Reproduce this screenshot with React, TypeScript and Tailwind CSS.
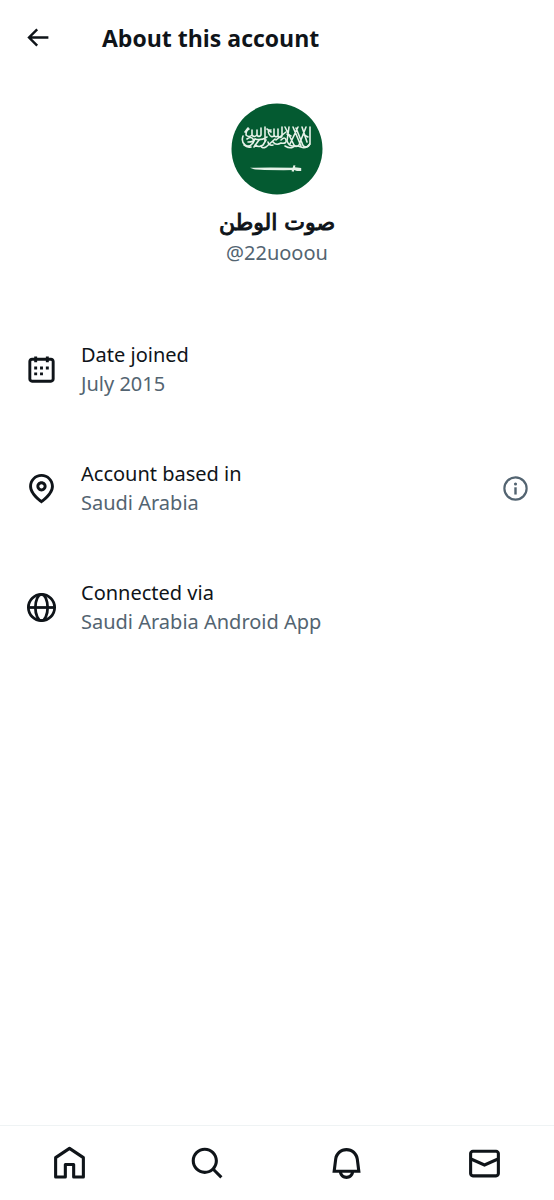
import React from "react";

type IconProps = {
  children: React.ReactNode;
  className: string;
};

const Icon = ({ children, className }: IconProps) => (
  <svg viewBox="0 0 24 24" fill="currentColor" className={className} aria-hidden="true">
    {children}
  </svg>
);

const Avatar = () => (
  <svg viewBox="0 0 92 92" className="h-[92px] w-[92px]" role="img" aria-label="Profile picture">
    <circle cx="46" cy="46" r="45.5" fill="#045a31" />
    {/* flag calligraphy */}
    <g
      fill="none"
      stroke="#e6f1e8"
      strokeWidth="1.6"
      strokeLinecap="round"
      strokeLinejoin="round"
    >
      {/* right part */}
      <path d="M79 24v16q-1 4-4 4t-4-4L65 25M75 24l-7 18q-3 3-5 0M71 24l5 15M67 24l-8 17M62 24l8 19M58 24l-2 14q2 5 6 5M54 24l9 18" />
      <path d="M79 41q-4 5-9 3t-8 0-8-1M73 32l4 2M60 33l-4-2" />
      {/* middle part */}
      <path d="M51 24v9q-2 3-4 0v-7M47 33q-3 2-4-1v-6M43 33q-3 2-5-2t2-4M50 37q4-4 5 0t-5 3q-5 3-8-1M44 36l-9 8q-4 2-5-1M55 29l-10 8" />
      {/* left part */}
      <path d="M34 24v14M30 25v7q-2 3-4 0v-5M26 32q-3 3-5 0v-5M21 32q-3 3-6 0 0-5 3-6M36 34q-6 4-12 2M17 25l-3 4" />
      <path d="M12 33q-2 6 2 9t8-2l2-4M16 36q4-3 6 0t-5 3M24 42q4 3 8 0l3-5M37 39q1 4 5 3M28 37l-5 7M13 42q3 3 7 2M36 26l4 3" />
    </g>
    {/* sword */}
    <g fill="#e6f1e8">
      <path d="M19 64.800q10-.300 44-.100v2.400q-33 .200-40-.800z" />
      <path d="M60.500 68.300l2-6 2 .300-.6 1.700 6.300.6v3.200l-4.300-.1-2.700-.9-.5 1.600z" />
    </g>
  </svg>
);

const rows = [
  {
    title: "Date joined",
    value: "July 2015",
    icon: (
      <path d="M7 4V3h2v1h6V3h2v1h1.500C19.890 4 21 5.120 21 6.500v12c0 1.380-1.110 2.500-2.500 2.500h-13C4.120 21 3 19.880 3 18.500v-12C3 5.120 4.120 4 5.500 4H7zm0 2H5.500c-.270 0-.500.220-.500.500v12c0 .280.230.500.500.500h13c.280 0 .500-.220.500-.500v-12c0-.280-.220-.500-.500-.500H17v1h-2V6H9v1H7V6zm0 6h2v-2H7v2zm0 4h2v-2H7v2zm4-4h2v-2h-2v2zm0 4h2v-2h-2v2zm4-4h2v-2h-2v2z" />
    ),
  },
  {
    title: "Account based in",
    value: "Saudi Arabia",
    info: true,
    icon: (
      <path d="M12 7c-1.930 0-3.500 1.570-3.500 3.500S10.070 14 12 14s3.500-1.570 3.500-3.500S13.930 7 12 7zm0 5c-.827 0-1.500-.673-1.500-1.500S11.173 9 12 9s1.500.673 1.500 1.500S12.827 12 12 12zm0-10c-4.687 0-8.500 3.813-8.500 8.500 0 5.967 7.621 11.116 7.945 11.332l.555.370.555-.370c.324-.216 7.945-5.365 7.945-11.332C20.500 5.813 16.687 2 12 2zm0 17.770c-1.665-1.241-6.500-5.196-6.500-9.270C5.500 6.916 8.416 4 12 4s6.500 2.916 6.500 6.500c0 4.073-4.835 8.028-6.500 9.270z" />
    ),
  },
  {
    title: "Connected via",
    value: "Saudi Arabia Android App",
    icon: (
      <g fill="none" stroke="currentColor" strokeWidth="1.9">
        <circle cx="12" cy="12" r="9" />
        <ellipse cx="12" cy="12" rx="4.200" ry="9" />
        <path d="M3 12h18" />
      </g>
    ),
  },
];

const tabs = [
  {
    label: "Home",
    icon: (
      <path
        d="M12 2.200L3 8.200V20.800h6.300v-8.200h5.400v8.200H21V8.200z"
        fill="none"
        stroke="currentColor"
        strokeWidth="2"
        strokeLinejoin="round"
      />
    ),
  },
  {
    label: "Search",
    icon: (
      <path d="M10.250 3.750c-3.590 0-6.500 2.910-6.500 6.500s2.910 6.500 6.500 6.500c1.795 0 3.419-.726 4.596-1.904 1.178-1.177 1.904-2.801 1.904-4.596 0-3.590-2.910-6.500-6.500-6.500zm-8.500 6.500c0-4.694 3.806-8.500 8.500-8.500s8.500 3.806 8.500 8.500c0 1.986-.682 3.815-1.824 5.262l4.781 4.781-1.414 1.414-4.781-4.781c-1.447 1.142-3.276 1.824-5.262 1.824-4.694 0-8.500-3.806-8.500-8.500z" />
    ),
  },
  {
    label: "Notifications",
    icon: (
      <path d="M19.993 9.042C19.480 5.017 16.054 2 11.996 2s-7.490 3.021-7.999 7.051L2.866 18H7.100c.463 2.282 2.481 4 4.900 4s4.437-1.718 4.900-4h4.236l-1.143-8.958zM12 20c-1.306 0-2.417-.835-2.829-2h5.658c-.412 1.165-1.523 2-2.829 2zm-6.866-4l.847-6.698C6.364 6.272 8.941 4 11.996 4s5.627 2.268 6.013 5.295L18.864 16H5.134z" />
    ),
  },
  {
    label: "Messages",
    icon: (
      <path d="M1.998 5.500c0-1.381 1.119-2.500 2.500-2.500h15c1.381 0 2.500 1.119 2.500 2.500v13c0 1.381-1.119 2.500-2.500 2.500h-15c-1.381 0-2.500-1.119-2.500-2.500v-13zm2.500-.500c-.276 0-.500.224-.500.500v2.764l8 3.638 8-3.636V5.500c0-.276-.224-.500-.500-.500h-15zm15.500 5.463l-8 3.636-8-3.638V18.500c0 .276.224.500.500.500h15c.276 0 .500-.224.500-.500v-8.037z" />
    ),
  },
];

const App = () => {
  return (
    <div className="flex min-h-screen flex-col bg-white font-['Noto_Sans','DejaVu_Sans',sans-serif] text-[#0f1419]">
      {/* top bar */}
      <header className="flex h-[75px] items-center px-[23px]">
        <button type="button" aria-label="Back">
          <Icon className="h-[29px] w-[29px]">
            <path d="M7.414 13l5.043 5.040-1.414 1.420L3.586 12l7.457-7.460 1.414 1.420L7.414 11H21v2H7.414z" />
          </Icon>
        </button>
        <h1 className="ml-[50px] font-['Open_Sans',sans-serif] text-[23px] leading-8 font-bold">
          About this account
        </h1>
      </header>

      <main className="flex-1">
        {/* profile */}
        <div className="flex flex-col items-center pt-7">
          <Avatar />
          <p
            dir="rtl"
            className="mt-3 font-['DejaVu_Sans',sans-serif] text-[22px] leading-8 [-webkit-text-stroke:1px_#0f1419]"
          >
            صوت الوطن
          </p>
          <p className="text-[20px] leading-7 text-[#536471]">@22uooou</p>
        </div>

        {/* account details */}
        <div className="mt-[73px] flex flex-col gap-[61px] px-6 pb-10">
          {rows.map((row) => (
            <div key={row.title} className="flex items-center">
              <Icon className="h-[35px] w-[35px] shrink-0">{row.icon}</Icon>
              <div className="ml-[22px] flex-1 text-[20px] leading-[29px]">
                <p>{row.title}</p>
                <p className="text-[#536471]">{row.value}</p>
              </div>
              {row.info && (
                <button type="button" aria-label="More information" className="text-[#536471]">
                  <Icon className="h-[29px] w-[29px]">
                    <circle cx="12" cy="12" r="9.200" fill="none" stroke="currentColor" strokeWidth="1.800" />
                    <circle cx="12" cy="8.300" r="1.300" />
                    <path d="M11 11h2v6h-2z" />
                  </Icon>
                </button>
              )}
            </div>
          ))}
        </div>
      </main>

      {/* bottom navigation */}
      <nav className="sticky bottom-0 grid h-[75px] grid-cols-4 border-t border-[#eff3f4] bg-white">
        {tabs.map((tab) => (
          <a key={tab.label} href="#" aria-label={tab.label} className="flex items-center justify-center">
            <Icon className="h-[37px] w-[37px]">{tab.icon}</Icon>
          </a>
        ))}
      </nav>
    </div>
  );
};

export default App;
